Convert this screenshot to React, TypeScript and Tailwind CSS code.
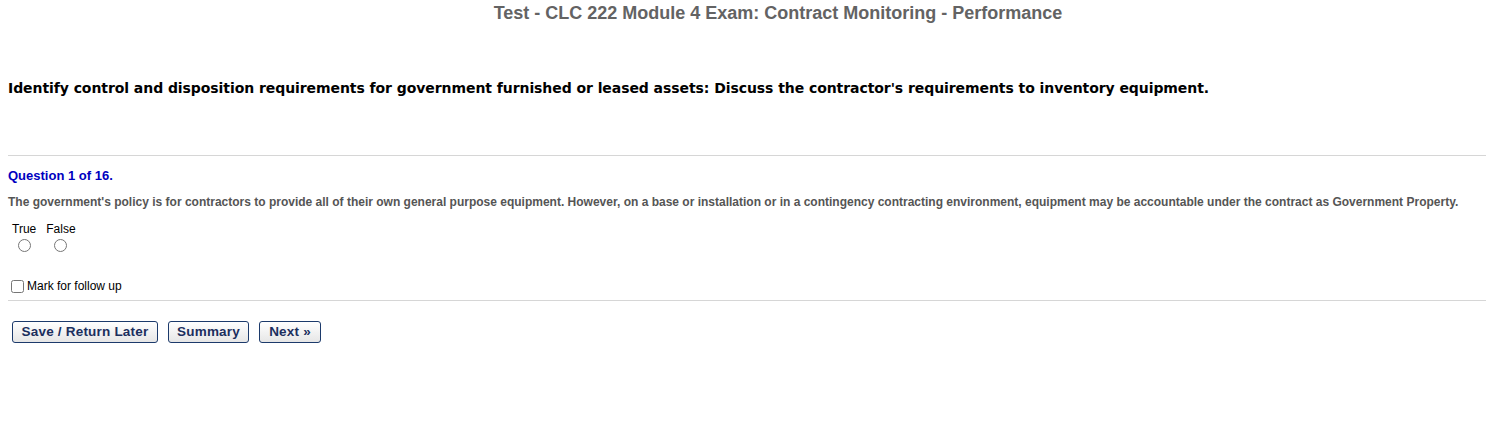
import { useState } from "react"

const arial = { fontFamily: '"Liberation Sans", Arial, sans-serif' }

function ExamButton({ label, width }: { label: string; width: string }) {
  return (
    <button
      type="button"
      className={`h-[22px] rounded-[3px] border border-[#1c3a6b] bg-gradient-to-b from-white to-[#e6e6e6] text-[13.5px] font-bold leading-none tracking-[0.2px] text-[#1c2f5e] ${width}`}
    >
      {label}
    </button>
  )
}

export default function App() {
  const [answer, setAnswer] = useState<string | null>(null)
  const [marked, setMarked] = useState(false)

  return (
    <div className="min-h-[441px] bg-white" style={arial}>
      {/* exam title */}
      <div className="pl-[70px] pt-[3px] text-center text-[18px] font-bold leading-[21px] text-[#636363]">
        Test - CLC 222 Module 4 Exam: Contract Monitoring - Performance
      </div>

      {/* objective */}
      <h2
        className="mt-[54px] pl-[8px] text-[14px] font-bold leading-[20px] tracking-[-0.07px] text-black"
        style={{ fontFamily: 'Verdana, "DejaVu Sans", sans-serif' }}
      >
        Identify control and disposition requirements for government furnished or leased assets: Discuss the contractor's requirements to inventory equipment.
      </h2>

      <div className="ml-[8px] mt-[57px] border-t border-[#d6d6d6]" />

      <div className="pl-[8px]">
        <div className="mt-[12px] text-[13px] font-bold leading-[15px] text-[#0000c0]">
          Question 1 of 16.
        </div>
        <p className="mt-[12px] text-[12px] font-bold leading-[14px] text-[#555555]">
          The government's policy is for contractors to provide all of their own general purpose equipment. However, on a base or installation or in a contingency contracting environment, equipment may be accountable under the contract as Government Property.
        </p>

        {/* answers */}
        <div className="mt-[13px] flex gap-[10px] pl-[4px] text-[12px] leading-[14px] text-black">
          {["True", "False"].map((opt) => (
            <label key={opt} className="flex flex-col items-center">
              <span>{opt}</span>
              <input
                type="radio"
                name="q1"
                checked={answer === opt}
                onChange={() => setAnswer(opt)}
                className="m-0 mt-[3px] h-[13px] w-[13px]"
              />
            </label>
          ))}
        </div>

        <label className="mt-[27px] flex items-center pl-[3px] text-[12px] leading-[14px] text-black">
          <input
            type="checkbox"
            checked={marked}
            onChange={(e) => setMarked(e.target.checked)}
            className="m-0 mr-[3px] h-[13px] w-[13px]"
          />
          Mark for follow up
        </label>
      </div>

      <div className="ml-[8px] mt-[7px] border-t border-[#d6d6d6]" />

      <div className="mt-[20px] flex gap-[10px] pl-[12px]">
        <ExamButton label="Save / Return Later" width="w-[146px]" />
        <ExamButton label="Summary" width="w-[81px]" />
        <ExamButton label="Next »" width="w-[62px]" />
      </div>
    </div>
  )
}
